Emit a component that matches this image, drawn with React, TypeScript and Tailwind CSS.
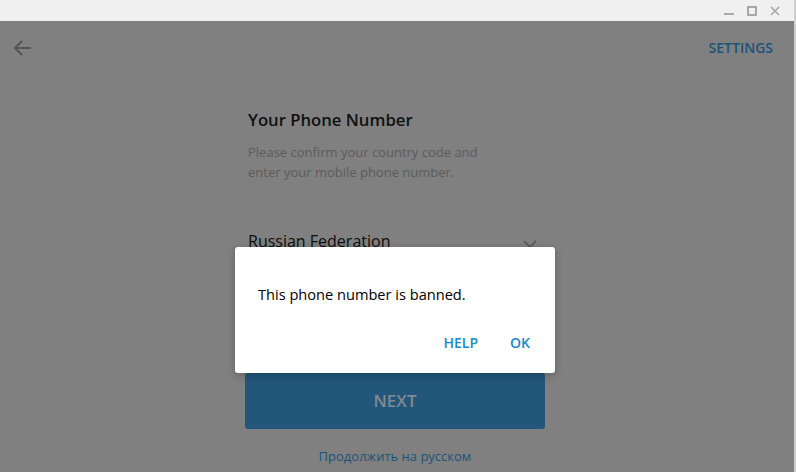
import React from "react";

const font = { fontFamily: '"Open Sans", "Noto Sans", sans-serif' };

function TitleBar() {
  return (
    <div className="flex h-[21px] items-center justify-end bg-[#f0f0f0] pr-[14px]">
      <div className="flex items-center gap-[13px] text-[#a8a8a8]">
        {/* minimize */}
        <svg width="10" height="10" viewBox="0 0 10 10">
          <rect x="0" y="7" width="10" height="2" fill="currentColor" />
        </svg>
        {/* maximize */}
        <svg width="10" height="10" viewBox="0 0 10 10">
          <rect x="1" y="1" width="8" height="8" fill="none" stroke="currentColor" strokeWidth="2" />
        </svg>
        {/* close */}
        <svg width="10" height="10" viewBox="0 0 10 10">
          <path d="M1 1 L9 9 M9 1 L1 9" stroke="currentColor" strokeWidth="1.6" />
        </svg>
      </div>
    </div>
  );
}

export default function App() {
  return (
    <div
      className="relative h-[472px] w-[796px] overflow-hidden border-r-2 border-[#cfcfcf] bg-[#808080]"
      style={font}
    >
      <TitleBar />

      {/* header */}
      <div className="flex h-[54px] items-center justify-between pl-[13px] pr-[21px]">
        <svg width="20" height="20" viewBox="0 0 20 20" className="text-[#555]">
          <path
            d="M18 10 H3 M9 3 L2 10 L9 17"
            fill="none"
            stroke="currentColor"
            strokeWidth="2"
          />
        </svg>
        <span className="text-[14px] font-semibold leading-[20px] text-[#1c5378]">
          SETTINGS
        </span>
      </div>

      {/* content column */}
      <div className="ml-[245px] flex w-[300px] flex-col">
        <h1 className="mt-[34px] pl-[3px] text-[16.7px] font-semibold leading-[22px] text-[#101010]">
          Your Phone Number
        </h1>
        <p className="mt-[11px] pl-[3px] text-[13px] leading-[20px] text-[#5c5c5c]">
          Please confirm your country code and
          <br />
          enter your mobile phone number.
        </p>
        <div className="mt-[48px] flex items-center justify-between pl-[3px] pr-[8px]">
          <span className="text-[16px] leading-[22px] text-[#0d0d0d]">
            Russian Federation
          </span>
          <svg width="14" height="10" viewBox="0 0 14 10" className="mt-[6px] text-[#5e5e5e]">
            <path d="M1 2 L7 8 L13 2" fill="none" stroke="currentColor" strokeWidth="1.8" />
          </svg>
        </div>
        <div className="mt-[16px] h-[2px] bg-[#224f6d]" />
        <div className="mt-[40px] flex items-center pl-[3px] text-[16px] leading-[22px] text-[#101010]">
          +7
        </div>
        <div className="mt-[8px] h-[1px] bg-[#6f6f6f]" />

        <button className="mt-[32px] flex h-[56px] items-center justify-center rounded-[3px] bg-[#22567a] text-[17px] font-semibold text-[#7f8a92]">
          NEXT
        </button>

        <div className="mt-[17px] text-center text-[13px] leading-[20px] text-[#1c5378]">
          Продолжить на русском
        </div>
      </div>

      {/* dialog */}
      <div className="absolute left-[235px] top-[247px] w-[320px] rounded-[3px] bg-white pb-[20px] pl-[23px] pr-[25px] pt-[37px] shadow-[0_2px_8px_rgba(0,0,0,0.25)]">
        <p className="text-[14.6px] leading-[20px] text-black">This phone number is banned.</p>
        <div className="mt-[29px] flex justify-end gap-[32px] text-[14px] font-semibold leading-[20px] text-[#168acd]">
          <span>HELP</span>
          <span>OK</span>
        </div>
      </div>
    </div>
  );
}
